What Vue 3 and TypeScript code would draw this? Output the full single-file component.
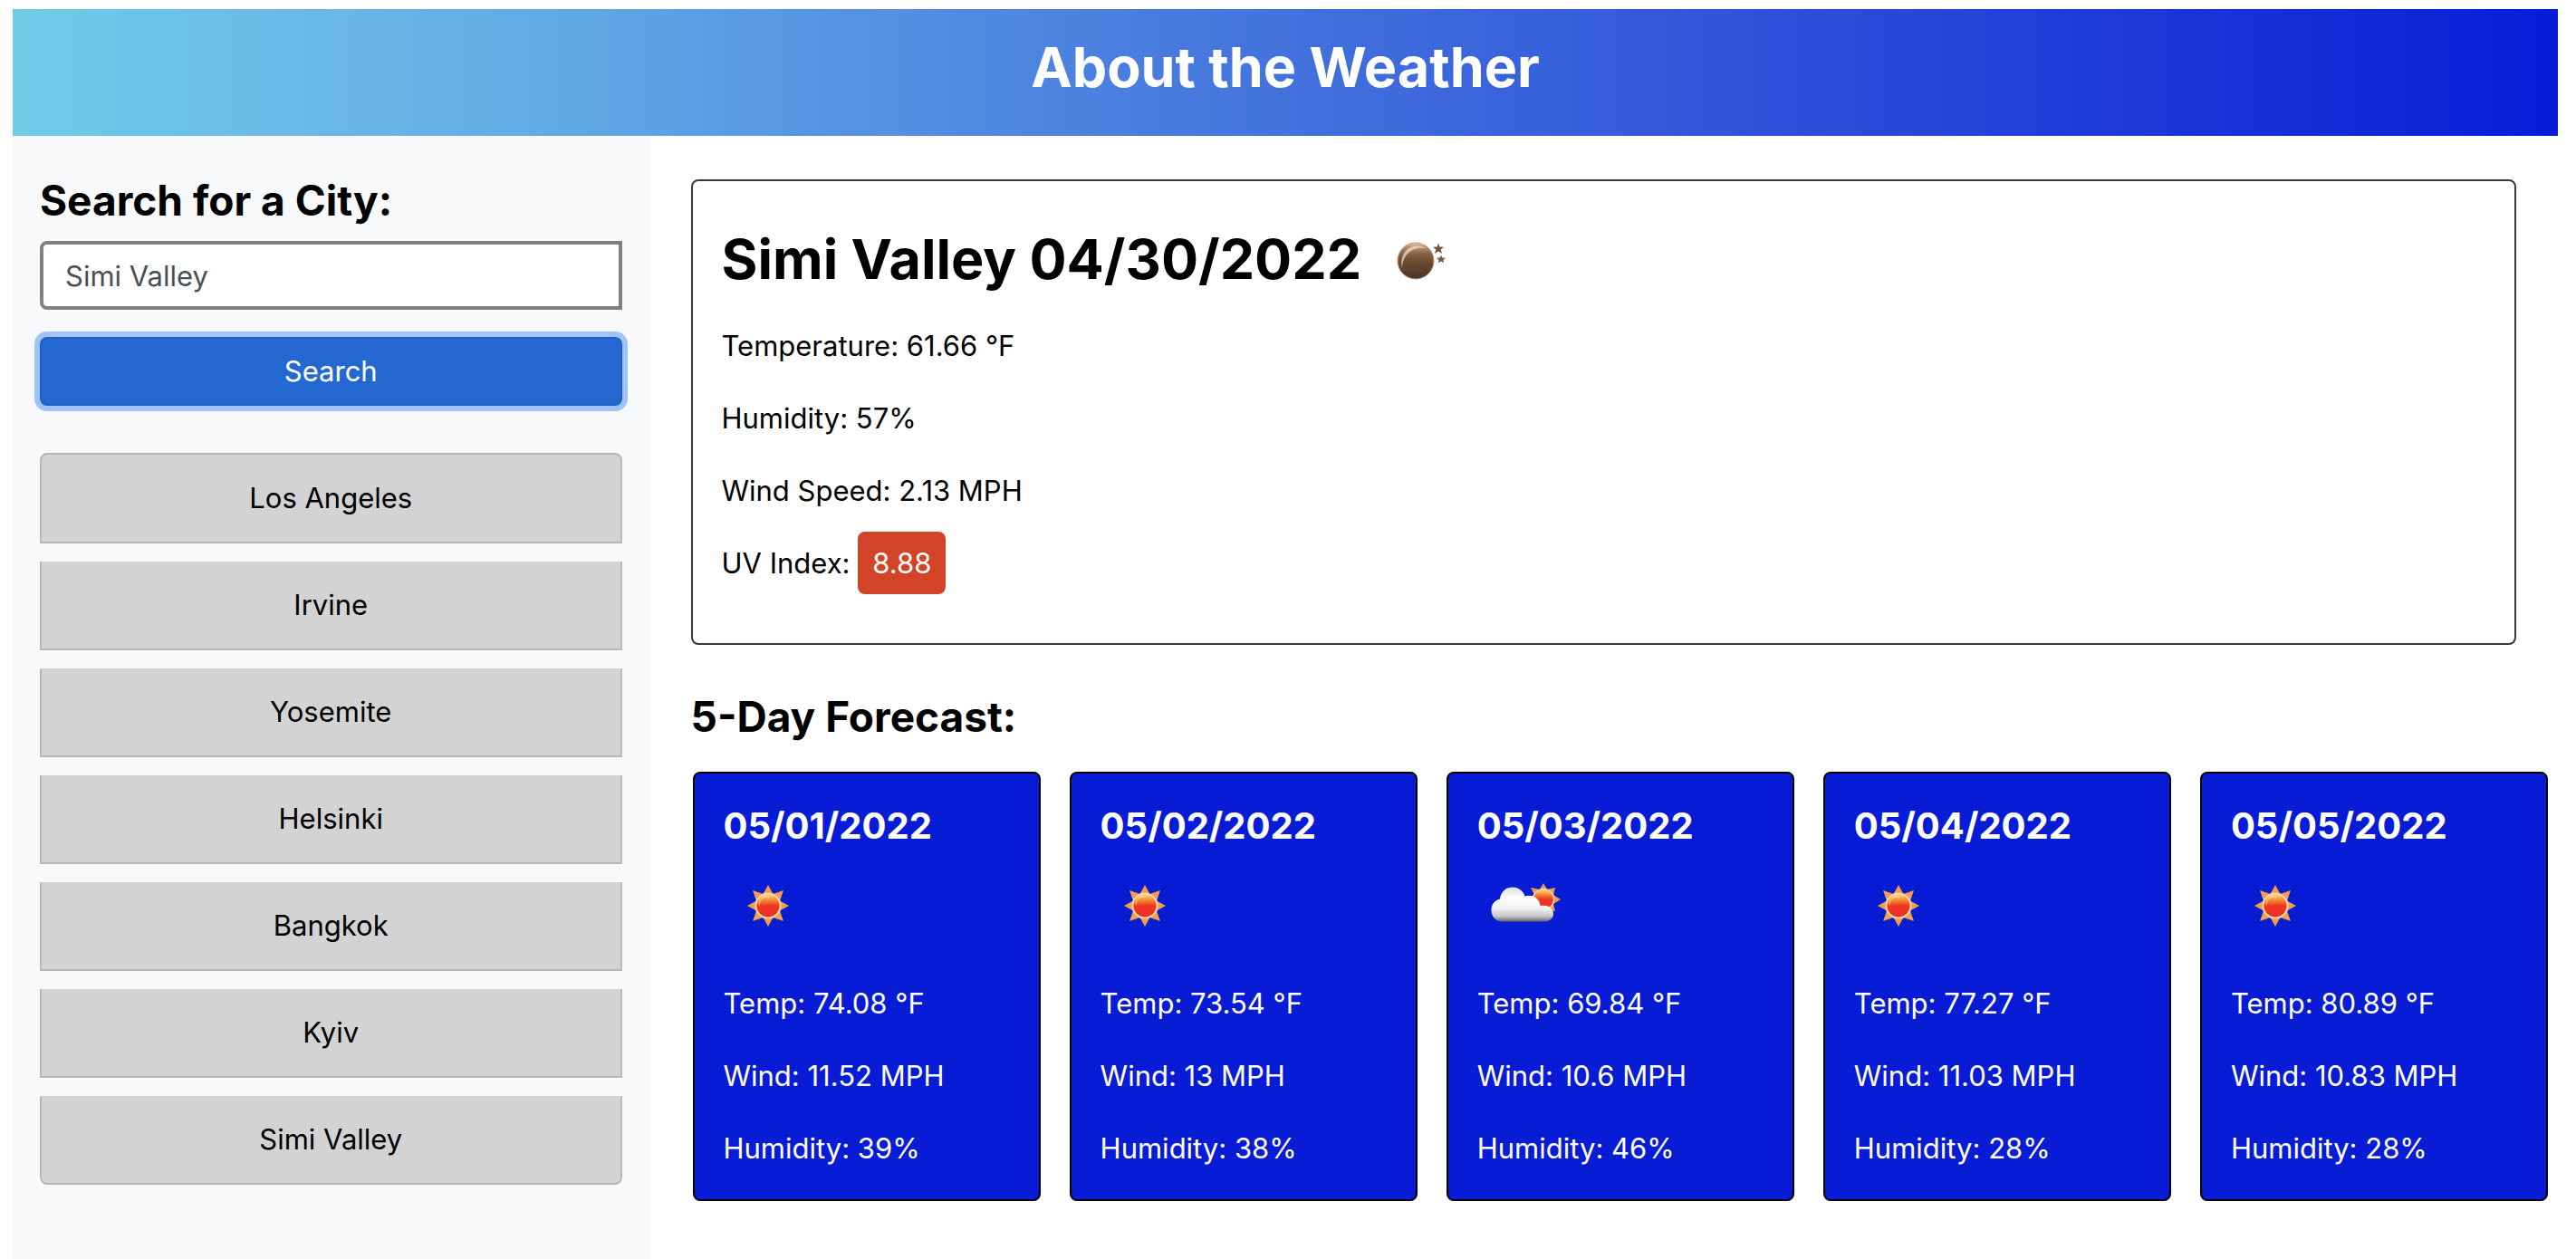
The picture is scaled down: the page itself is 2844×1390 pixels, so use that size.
<script setup lang="ts">
import { ref } from 'vue'

type Sky = 'sun' | 'cloud'

interface Day {
  date: string
  sky: Sky
  temp: string
  wind: string
  humidity: string
}

const city = ref('')
const selected = ref('Simi Valley')
const history = ref<string[]>(['Los Angeles', 'Irvine', 'Yosemite', 'Helsinki', 'Bangkok', 'Kyiv', 'Simi Valley'])

const days: Day[] = [
  { date: '05/01/2022', sky: 'sun', temp: '74.08', wind: '11.52', humidity: '39' },
  { date: '05/02/2022', sky: 'sun', temp: '73.54', wind: '13', humidity: '38' },
  { date: '05/03/2022', sky: 'cloud', temp: '69.84', wind: '10.6', humidity: '46' },
  { date: '05/04/2022', sky: 'sun', temp: '77.27', wind: '11.03', humidity: '28' },
  { date: '05/05/2022', sky: 'sun', temp: '80.89', wind: '10.83', humidity: '28' },
]

function search(): void {
  const name = city.value.trim()
  if (!name) return
  selected.value = name
  if (!history.value.includes(name)) history.value.push(name)
}
</script>

<template>
  <div class="page">
    <header class="banner">
      <h1>About the Weather</h1>
    </header>

    <div class="columns">
      <aside class="sidebar">
        <form @submit.prevent="search">
          <label class="section-title" for="city">Search for a City:</label>
          <input id="city" v-model="city" class="city-input" type="text" placeholder="Simi Valley" />
          <button class="search-button" type="submit">Search</button>
        </form>
        <div class="history">
          <button v-for="name in history" :key="name" type="button" @click="selected = name">{{ name }}</button>
        </div>
      </aside>

      <main class="content">
        <section class="current">
          <div class="current-head">
            <h2>{{ selected }} 04/30/2022</h2>
            <svg class="moon" viewBox="0 0 96 96" aria-hidden="true">
              <defs>
                <linearGradient id="moon-fill" x1="0" y1="0" x2="0" y2="1">
                  <stop offset="0" stop-color="#e6c3a0" />
                  <stop offset="0.14" stop-color="#b08a68" />
                  <stop offset="0.34" stop-color="#7f5c3f" />
                  <stop offset="0.6" stop-color="#654730" />
                  <stop offset="1" stop-color="#4c3523" />
                </linearGradient>
              </defs>
              <circle cx="48" cy="50" r="20" fill="url(#moon-fill)" stroke="#b49a84" stroke-width="1" />
              <path d="M33 58 C30 44 38 34 49 33.500 C54 33.300 58 35 60 36.500 C48 33.500 34 40 33 58Z" fill="#ecdccd" opacity="0.75" />
              <path d="M73 30.500 L74.500 34.500 L79 34.700 L75.700 37.500 L77 42 L73 39.500 L69 42 L70.300 37.500 L67 34.700 L71.500 34.500Z" fill="#75583f" />
              <path d="M76 43.500 L77.300 46.600 L81 46.800 L78.300 49 L79.200 52.200 L76 50.500 L72.800 52.200 L73.700 49 L71 46.800 L74.700 46.600Z" fill="#75583f" />
            </svg>
          </div>
          <p>Temperature: 61.66 °F</p>
          <p>Humidity: 57%</p>
          <p>Wind Speed: 2.13 MPH</p>
          <p>UV Index: <span class="uv">8.88</span></p>
        </section>

        <h2 class="section-title">5-Day Forecast:</h2>
        <div class="forecast">
          <article v-for="(day, i) in days" :key="day.date" class="day">
            <h3>{{ day.date }}</h3>
            <svg class="sky" viewBox="0 0 100 100" aria-hidden="true">
              <defs>
                <linearGradient :id="`core-${i}`" x1="0" y1="0" x2="0" y2="1">
                  <stop offset="0" stop-color="#fbe08a" />
                  <stop offset="0.2" stop-color="#f3a540" />
                  <stop offset="0.42" stop-color="#ec5628" />
                  <stop offset="0.5" stop-color="#ee3524" />
                  <stop offset="1" stop-color="#ea3323" />
                </linearGradient>
                <linearGradient :id="`cloud-${i}`" gradientUnits="userSpaceOnUse" x1="0" y1="29" x2="0" y2="68">
                  <stop offset="0" stop-color="#d6d6d8" />
                  <stop offset="0.3" stop-color="#ffffff" />
                  <stop offset="0.62" stop-color="#f1f1f2" />
                  <stop offset="0.83" stop-color="#c8c8ca" />
                  <stop offset="1" stop-color="#5c5c66" />
                </linearGradient>
              </defs>
              <g v-if="day.sky === 'sun'">
                <path
                  d="M49 27 L54.500 37 L66 33 L62 44.500 L72 50 L62 55.500 L66 67 L54.500 63 L49 73 L43.500 63 L32 67 L36 55.500 L26 50 L36 44.500 L32 33 L43.500 37Z"
                  fill="#eda044"
                />
                <circle cx="49" cy="50" r="13.500" :fill="`url(#core-${i})`" stroke="#f7d3b4" stroke-width="2" />
                <path d="M39 49 C39 42 44 39.500 50 40" fill="none" stroke="#fdeeb0" stroke-width="1.500" opacity="0.5" />
              </g>
              <g v-else>
                <path
                  d="M73 25 L77 32 L86 30 L84 38 L92 43 L84 48 L86 56 L77 54 L73 61 L69 54 L60 56 L63 48 L54 43 L63 38 L59 30 L69 32Z"
                  fill="#eda044"
                />
                <circle cx="73" cy="43" r="11.500" :fill="`url(#core-${i})`" stroke="#f7d3b4" stroke-width="1.500" />
                <path
                  d="M28 67.500 C20 67.500 15.500 61.500 15.500 55 C15.500 48.500 19 44 25 42.500 C26 34 32 29.500 39 29.500 C46 29.500 51 34 52.500 39.500 C61 36.500 69 42 69.500 50 C77 48.500 84 52 84 58.500 C84 64 79.500 67.500 75 67.500Z"
                  :fill="`url(#cloud-${i})`"
                />
              </g>
            </svg>
            <p>Temp: {{ day.temp }} °F</p>
            <p>Wind: {{ day.wind }} MPH</p>
            <p>Humidity: {{ day.humidity }}%</p>
          </article>
        </div>
      </main>
    </div>
  </div>
</template>

<style>
body {
  margin: 0;
  background: #fff;
}
</style>

<style scoped>
* {
  box-sizing: border-box;
}

.page {
  display: flex;
  flex-direction: column;
  min-height: 100vh;
  padding: 10px 20px 0 14px;
  font-family: Inter, 'Liberation Sans', sans-serif;
  font-size: 31px;
  line-height: 48px;
  color: #000;
}

h1,
h2,
h3,
p {
  margin: 0;
}

.banner {
  padding: 26px 32px 38px;
  background: linear-gradient(to right, #71cbe8, #63ace6 20%, #4372dd 50%, #081cd6);
  color: #fff;
  text-align: center;
}

.banner h1,
.current-head h2 {
  font-size: 61px;
  line-height: 76px;
  font-weight: 700;
}

.columns {
  display: flex;
  flex: 1;
}

.sidebar {
  flex: 0 0 25%;
  padding: 42px 30px 0;
  background: #f8f9fb;
}

.section-title {
  display: block;
  font-size: 46px;
  line-height: 58px;
  font-weight: 700;
}

.city-input,
.search-button,
.history button {
  display: block;
  width: 100%;
  font: inherit;
}

.city-input {
  height: 76px;
  margin-top: 16px;
  padding: 0 24px;
  border: 4px solid #808080;
  border-radius: 8px 0 0 8px;
  background: #fff;
  color: #495057;
}

.city-input::placeholder {
  color: #495057;
  opacity: 1;
}

.search-button {
  height: 76px;
  margin-top: 30px;
  padding: 0 24px;
  border: 2px solid #2161c2;
  border-radius: 8px;
  background: #2469d2;
  color: #fff;
  box-shadow: 0 0 0 6px #a0c3fa;
}

.history {
  display: flex;
  flex-direction: column;
  gap: 20px;
  margin-top: 52px;
}

.history button {
  padding: 24px 40px;
  border: 2px solid #b7b8ba;
  border-top-width: 0;
  border-radius: 0;
  background: #d3d3d3;
  color: #000;
}

.history button:first-child {
  border-top-width: 2px;
  border-radius: 8px 8px 0 0;
}

.history button:last-child {
  border-radius: 0 0 8px 8px;
}

.content {
  flex: 1;
  min-width: 0;
  padding: 48px 46px 64px;
}

.current {
  display: flex;
  flex-direction: column;
  gap: 32px;
  padding: 38px 32px 64px;
  margin-bottom: 50px;
  border: 2px solid #343a40;
  border-radius: 8px;
}

.current-head {
  display: flex;
  align-items: center;
  gap: 12px;
  margin-bottom: -8px;
}

.moon {
  flex: none;
  width: 96px;
  height: 96px;
}

.uv {
  padding: 16px;
  border-radius: 8px;
  background: #d34328;
  color: #fff;
}

.forecast {
  display: grid;
  grid-template-columns: repeat(5, 1fr);
  gap: 32px;
  margin: 32px -35px 0 2px;
}

.day {
  display: flex;
  flex-direction: column;
  gap: 32px;
  padding: 32px;
  border: 2px solid #000;
  border-radius: 8px;
  background: #081cd6;
  color: #fff;
}

.day h3 {
  font-size: 40px;
  line-height: 52px;
  font-weight: 700;
}

.sky {
  width: 100px;
  height: 100px;
  margin: -20px 0 2px;
}
</style>
